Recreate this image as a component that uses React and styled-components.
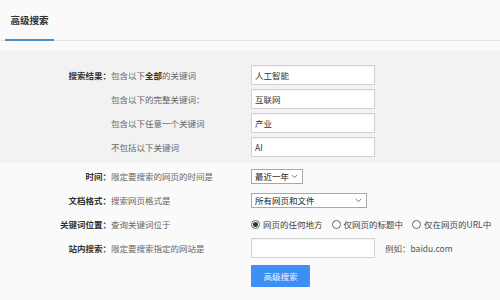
import React from "react";
import styled, { createGlobalStyle } from "styled-components";

const GlobalStyle = createGlobalStyle`
  html, body {
    margin: 0;
    padding: 0;
    background: #fafafa;
  }
  body {
    font-family: "Noto Sans CJK SC", "Liberation Sans", sans-serif;
    font-size: 8.5px;
    color: #555;
  }
`;

const Page = styled.div`
  width: 500px;
  height: 300px;
  overflow: hidden;
  background: #fafafa;
`;

const TabBar = styled.div`
  height: 40px;
  border-bottom: 1px solid #e6e6e6;
  display: flex;
  padding-left: 5px;
`;

const Tab = styled.div`
  width: 49px;
  box-sizing: border-box;
  display: flex;
  align-items: center;
  justify-content: center;
  font-size: 9.5px;
  font-weight: bold;
  color: #333;
  border-bottom: 2px solid #4b8fc4;
  padding-top: 1px;
  margin-bottom: -1px;
`;

const Panel = styled.div`
  margin-top: 10px;
  background: #f2f2f2;
  padding: 12px 0 4px;
`;

const Section = styled.div`
  padding-top: 1px;
`;

const Row = styled.div`
  display: flex;
  align-items: center;
  height: 24px;
`;

const Label = styled.div`
  width: 111px;
  flex: none;
  text-align: right;
  font-weight: bold;
  color: #333;
`;

const Desc = styled.div`
  width: 140px;
  flex: none;
  color: #666;
  white-space: nowrap;

  b {
    color: #333;
  }
`;

const TextBox = styled.div`
  width: 124px;
  height: 20px;
  box-sizing: border-box;
  border: 1px solid #d2d2d2;
  box-shadow: inset 0 1px 1px rgba(0, 0, 0, 0.06);
  background: #fff;
  display: flex;
  align-items: center;
  padding-left: 3px;
  color: #333;
`;

const Select = styled.div`
  width: ${(p) => p.$width}px;
  height: 15px;
  box-sizing: border-box;
  border: 1px solid #a9a9a9;
  background: #fff;
  display: flex;
  align-items: center;
  justify-content: space-between;
  padding: 0 4px 0 3px;
  color: #222;
  font-size: 8.5px;
`;

const Radios = styled.div`
  display: flex;
  align-items: center;
  gap: 9px;
`;

const Option = styled.label`
  display: flex;
  align-items: center;
  gap: 3px;
  color: #444;
  white-space: nowrap;
`;

const Dot = styled.span`
  width: 9px;
  height: 9px;
  box-sizing: border-box;
  border-radius: 50%;
  border: 1px solid #666;
  background: #fff;
  display: flex;
  align-items: center;
  justify-content: center;

  &::after {
    content: "";
    width: 5px;
    height: 5px;
    border-radius: 50%;
    background: ${(p) => (p.$on ? "#333" : "transparent")};
  }
`;

const Hint = styled.span`
  margin-left: 10px;
  color: #555;
`;

const ButtonRow = styled.div`
  padding-left: 251px;
  margin-top: 5px;
`;

const SearchButton = styled.button`
  width: 59px;
  height: 22px;
  border: none;
  border-radius: 1px;
  background: #3d8ff5;
  color: #eef4ff;
  font-family: inherit;
  font-size: 8.5px;
  padding: 0;
  cursor: pointer;
`;

const Chevron = () => (
  <svg width="7" height="5" viewBox="0 0 7 5">
    <path d="M0.8 1 L3.5 3.6 L6.2 1" fill="none" stroke="#666" strokeWidth="0.9" />
  </svg>
);

const keywordRows = [
  { label: "搜索结果：", desc: (<>包含以下<b>全部</b>的关键词</>), value: "人工智能" },
  { label: "", desc: "包含以下的完整关键词：", value: "互联网" },
  { label: "", desc: "包含以下任意一个关键词", value: "产业" },
  { label: "", desc: "不包括以下关键词", value: "AI" },
];

const App = () => {
  return (
    <Page>
      <GlobalStyle />
      <TabBar>
        <Tab>高级搜索</Tab>
      </TabBar>
      <Panel>
        {keywordRows.map((row, i) => (
          <Row key={i}>
            <Label>{row.label}</Label>
            <Desc>{row.desc}</Desc>
            <TextBox>{row.value}</TextBox>
          </Row>
        ))}
      </Panel>
      <Section>
        <Row>
          <Label>时间：</Label>
          <Desc>限定要搜索的网页的时间是</Desc>
          <Select $width={52}>
            最近一年
            <Chevron />
          </Select>
        </Row>
        <Row>
          <Label>文档格式：</Label>
          <Desc>搜索网页格式是</Desc>
          <Select $width={116}>
            所有网页和文件
            <Chevron />
          </Select>
        </Row>
        <Row>
          <Label>关键词位置：</Label>
          <Desc>查询关键词位于</Desc>
          <Radios>
            <Option>
              <Dot $on />
              网页的任何地方
            </Option>
            <Option>
              <Dot />
              仅网页的标题中
            </Option>
            <Option>
              <Dot />
              仅在网页的URL中
            </Option>
          </Radios>
        </Row>
        <Row>
          <Label>站内搜索：</Label>
          <Desc>限定要搜索指定的网站是</Desc>
          <TextBox />
          <Hint>例如：baidu.com</Hint>
        </Row>
        <ButtonRow>
          <SearchButton>高级搜索</SearchButton>
        </ButtonRow>
      </Section>
    </Page>
  );
};

export default App;
